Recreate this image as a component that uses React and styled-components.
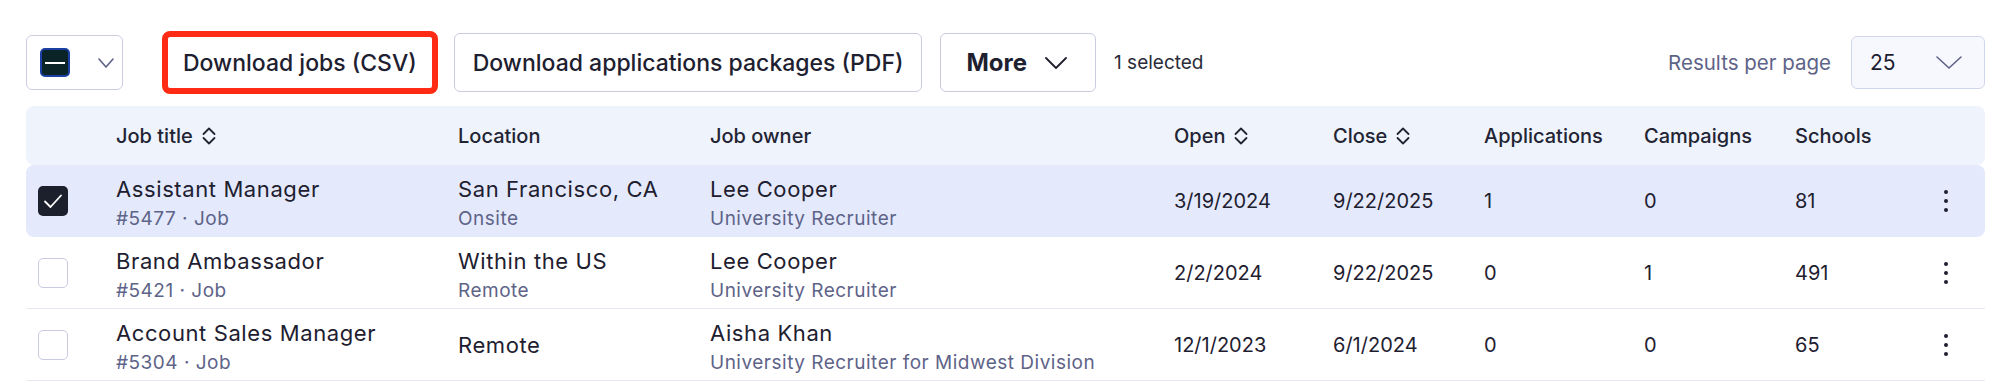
import React from 'react';
import styled, { createGlobalStyle } from 'styled-components';

const GlobalStyle = createGlobalStyle`
  body {
    margin: 0;
    background: #ffffff;
    font-family: Inter, "Noto Sans", sans-serif;
    color: #1e2030;
  }
`;

const Page = styled.div`
  padding: 32px 21px 0 26px;
`;

const Toolbar = styled.div`
  display: flex;
  align-items: center;
  height: 61px;
`;

const BulkSelect = styled.div`
  display: flex;
  align-items: center;
  gap: 28px;
  width: 97px;
  height: 55px;
  box-sizing: border-box;
  padding-left: 13px;
  border: 1px solid #cbcee2;
  border-radius: 6px;
  margin-right: 41px;
`;

const Indeterminate = styled.span`
  display: flex;
  align-items: center;
  justify-content: center;
  width: 30px;
  height: 29px;
  box-sizing: border-box;
  background: #0a2327;
  border: 2px solid #1b3fa3;
  border-radius: 5px;
  &::after {
    content: '';
    width: 20px;
    height: 2px;
    background: #ffffff;
  }
`;

const Button = styled.button`
  display: flex;
  align-items: center;
  gap: 18px;
  height: 59px;
  box-sizing: border-box;
  padding: ${p => (p.$menu ? '0 28px 0 25px' : '0 18px')};
  margin-right: 18px;
  background: #ffffff;
  border: 1px solid #c9cce0;
  border-radius: 6px;
  font-family: Inter, sans-serif;
  font-size: ${p => (p.$bold ? '24px' : '23px')};
  font-weight: ${p => (p.$bold ? 700 : 500)};
  color: #1e2030;
  white-space: nowrap;
  outline: ${p => (p.$marked ? '6px solid #ff2b14' : 'none')};
  outline-offset: -4px;
`;

const Selected = styled.span`
  font-size: 19px;
  color: #2a2c3a;
`;

const Spacer = styled.div`
  flex: 1;
`;

const PerPageLabel = styled.span`
  font-size: 20.5px;
  color: #5e6388;
  margin-right: 20px;
`;

const PerPageSelect = styled.div`
  display: flex;
  align-items: center;
  justify-content: space-between;
  width: 134px;
  height: 53px;
  box-sizing: border-box;
  padding: 0 22px 0 18px;
  background: #f7f8fd;
  border: 1px solid #d2d6ec;
  border-radius: 6px;
  font-size: 21px;
`;

const Table = styled.div`
  margin-top: 13px;
`;

const cols = '90px 342px 252px 464px 159px 151px 160px 151px 1fr 55px';

const HeaderRow = styled.div`
  display: grid;
  grid-template-columns: ${cols};
  align-items: center;
  height: 59px;
  background: #eff3fc;
  border-radius: 8px;
`;

const HeadCell = styled.div`
  display: flex;
  align-items: center;
  gap: 8px;
  font-size: 20px;
  font-weight: 500;
  color: #222433;
  white-space: nowrap;
`;

const Row = styled.div`
  display: grid;
  grid-template-columns: ${cols};
  align-items: center;
  height: 72px;
  background: ${p => (p.$selected ? '#e4eafc' : '#ffffff')};
  border-radius: ${p => (p.$selected ? '8px' : '0')};
  border-bottom: ${p => (p.$selected ? 'none' : '1px solid #e7e8ef')};
  box-sizing: border-box;
`;

const BoxCell = styled.div`
  padding-left: 12px;
`;

const Check = styled.span`
  display: flex;
  align-items: center;
  justify-content: center;
  width: 30px;
  height: 30px;
  box-sizing: border-box;
  border-radius: 5px;
  background: ${p => (p.$on ? '#1c1f2c' : '#ffffff')};
  border: ${p => (p.$on ? 'none' : '1.5px solid #c9cbe0')};
`;

const Cell = styled.div`
  display: flex;
  flex-direction: column;
  justify-content: center;
  padding-top: ${p => (p.$stack ? '6px' : '0')};
  white-space: nowrap;
`;

const Main = styled.span`
  font-size: 22px;
  letter-spacing: 0.6px;
  line-height: 30px;
  color: #1e2030;
`;

const Value = styled.span`
  font-size: 20px;
  line-height: 30px;
  color: #1e2030;
`;

const Sub = styled.span`
  font-size: 19px;
  letter-spacing: 0.5px;
  line-height: 30px;
  color: #5e6388;
`;

const Kebab = styled.div`
  display: flex;
  flex-direction: column;
  gap: 5px;
  padding-left: 14px;
  span {
    width: 4px;
    height: 4px;
    border-radius: 50%;
    background: #1e2030;
  }
`;

const Chevron = ({ w = 16, h = 10, color = '#5e6388', sw = 1.6 }) => (
  <svg width={w} height={h} viewBox={`0 0 ${w} ${h}`} fill="none">
    <path d={`M1 1 L${w / 2} ${h - 1} L${w - 1} 1`} stroke={color} strokeWidth={sw} strokeLinecap="round" strokeLinejoin="round" />
  </svg>
);

const SortIcon = () => (
  <svg width="16" height="20" viewBox="0 0 16 20" fill="none">
    <path d="M2.5 8 L8 2.5 L13.5 8" stroke="#222433" strokeWidth="1.8" strokeLinecap="round" strokeLinejoin="round" />
    <path d="M2.5 12 L8 17.5 L13.5 12" stroke="#222433" strokeWidth="1.8" strokeLinecap="round" strokeLinejoin="round" />
  </svg>
);

const CheckMark = () => (
  <svg width="20" height="16" viewBox="0 0 20 16" fill="none">
    <path d="M2 8.5 L7.5 14 L18 2.5" stroke="#ffffff" strokeWidth="1.8" strokeLinecap="round" strokeLinejoin="round" />
  </svg>
);

const jobs = [
  { title: 'Assistant Manager', id: '#5477 · Job', loc: 'San Francisco, CA', mode: 'Onsite', owner: 'Lee Cooper', role: 'University Recruiter', open: '3/19/2024', close: '9/22/2025', apps: 1, camps: 0, schools: 81, selected: true },
  { title: 'Brand Ambassador', id: '#5421 · Job', loc: 'Within the US', mode: 'Remote', owner: 'Lee Cooper', role: 'University Recruiter', open: '2/2/2024', close: '9/22/2025', apps: 0, camps: 1, schools: 491 },
  { title: 'Account Sales Manager', id: '#5304 · Job', loc: 'Remote', owner: 'Aisha Khan', role: 'University Recruiter for Midwest Division', open: '12/1/2023', close: '6/1/2024', apps: 0, camps: 0, schools: 65 },
];

export default function App() {
  return (
    <>
      <GlobalStyle />
      <Page>
        <Toolbar>
          <BulkSelect>
            <Indeterminate />
            <Chevron />
          </BulkSelect>
          <Button $marked>Download jobs (CSV)</Button>
          <Button>Download applications packages (PDF)</Button>
          <Button $bold $menu>
            More
            <Chevron w={22} h={12} color="#1e2030" sw={1.8} />
          </Button>
          <Selected>1 selected</Selected>
          <Spacer />
          <PerPageLabel>Results per page</PerPageLabel>
          <PerPageSelect>
            25
            <Chevron w={26} h={13} color="#5e6388" sw={1.6} />
          </PerPageSelect>
        </Toolbar>

        <Table>
          <HeaderRow>
            <div />
            <HeadCell>Job title <SortIcon /></HeadCell>
            <HeadCell>Location</HeadCell>
            <HeadCell>Job owner</HeadCell>
            <HeadCell>Open <SortIcon /></HeadCell>
            <HeadCell>Close <SortIcon /></HeadCell>
            <HeadCell>Applications</HeadCell>
            <HeadCell>Campaigns</HeadCell>
            <HeadCell>Schools</HeadCell>
            <div />
          </HeaderRow>

          {jobs.map(job => (
            <Row key={job.id} $selected={job.selected}>
              <BoxCell>
                <Check $on={job.selected}>{job.selected && <CheckMark />}</Check>
              </BoxCell>
              <Cell $stack>
                <Main>{job.title}</Main>
                <Sub>{job.id}</Sub>
              </Cell>
              <Cell $stack={!!job.mode}>
                <Main>{job.loc}</Main>
                {job.mode && <Sub>{job.mode}</Sub>}
              </Cell>
              <Cell $stack>
                <Main>{job.owner}</Main>
                <Sub>{job.role}</Sub>
              </Cell>
              <Cell><Value>{job.open}</Value></Cell>
              <Cell><Value>{job.close}</Value></Cell>
              <Cell><Value>{job.apps}</Value></Cell>
              <Cell><Value>{job.camps}</Value></Cell>
              <Cell><Value>{job.schools}</Value></Cell>
              <Kebab><span /><span /><span /></Kebab>
            </Row>
          ))}
        </Table>
      </Page>
    </>
  );
}
